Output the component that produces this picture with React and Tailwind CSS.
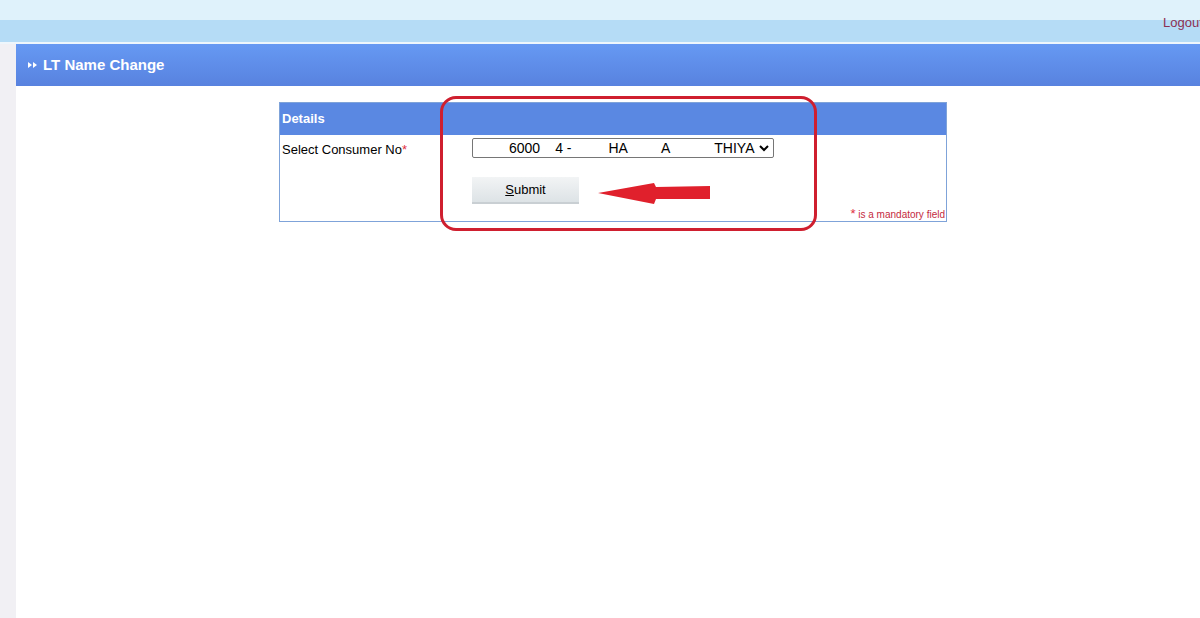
import React from "react";

const Arrow = () => (
  <svg width="118" height="26" viewBox="0 0 118 26" className="absolute left-[596px] top-[180px]">
    <path d="M2 13 L58 3 L60 7 L114 6 L114 19 L60 19 L58 24 Z" fill="#e0202c" />
  </svg>
);

const DoubleArrow = () => (
  <svg width="9" height="8" viewBox="0 0 9 8">
    <path d="M0 1 L4 4 L0 7 Z M5 1 L9 4 L5 7 Z" fill="#fff" />
  </svg>
);

const App = () => {
  return (
    <div className="relative w-[1200px] h-[618px] overflow-hidden bg-white font-['Liberation_Sans',Arial,sans-serif]">
      {/* top band: light strip over a deeper blue strip */}
      <div className="h-[42px] bg-[linear-gradient(to_bottom,#dff2fb_0px,#dff2fb_20px,#b5dcf6_20px,#b5dcf6_42px)] pl-[1163px] pt-[14px] whitespace-nowrap leading-none">
        <span className="text-[13px] text-[#8c2f52]">Logout</span>
      </div>
      <div className="h-[2px] bg-[#eef6fc]" />
      <div className="flex h-[574px]">
        <div className="w-[16px] bg-[#f1f0f4]" />
        <div className="flex-1 flex flex-col">
          <div className="h-[42px] bg-gradient-to-b from-[#6699f3] to-[#5882df] flex items-center pl-[12px] gap-[6px]">
            <DoubleArrow />
            <span className="text-white font-bold text-[15px]">LT Name Change</span>
          </div>
          <div className="pt-[16px] pl-[263px]">
            <div className="w-[668px] h-[120px] border border-[#7fa3d9] flex flex-col">
              <div className="h-[32px] bg-[#5a88e2] flex items-center pl-[2px]">
                <span className="text-white font-bold text-[13px]">Details</span>
              </div>
              <div className="flex-1 flex">
                <div className="w-[192px] pl-[2px] pt-[5px] text-[13px] text-black">
                  Select Consumer No<span className="text-[#e0303f]">*</span>
                </div>
                <div className="flex-1 flex flex-col pt-[3px]">
                  <div className="w-[302px] h-[20px] border border-[#767676] rounded-[2px] flex items-center text-[14px] text-black whitespace-nowrap">
                    <span className="ml-[36px]">6000</span>
                    <span className="ml-[15px]">4 -</span>
                    <span className="ml-[37px]">HA</span>
                    <span className="ml-[33px]">A</span>
                    <span className="ml-[44px]">THIYA</span>
                    <svg width="12" height="12" viewBox="0 0 12 12" className="ml-[3px]">
                      <path d="M2 4 L6 8 L10 4" stroke="#000" strokeWidth="2" fill="none" />
                    </svg>
                  </div>
                  <button className="mt-[19px] w-[107px] h-[27px] bg-gradient-to-b from-[#f2f4f5] to-[#dde3e6] border-b-2 border-[#c9cfd3] text-[13px] text-black">
                    <span className="underline">S</span>ubmit
                  </button>
                  <div className="mt-auto self-end pr-[1px] pb-[1px] text-[10px] text-[#c42a3e] leading-none">
                    <span className="text-[13px] text-[#e0303f]">*</span> is a mandatory field
                  </div>
                </div>
              </div>
            </div>
          </div>
        </div>
      </div>
      {/* annotation overlay */}
      <div className="absolute left-[440px] top-[96px] w-[377px] h-[135px] border-[3px] border-[#cf1f2f] rounded-[16px]" />
      <Arrow />
    </div>
  );
};

export default App;
